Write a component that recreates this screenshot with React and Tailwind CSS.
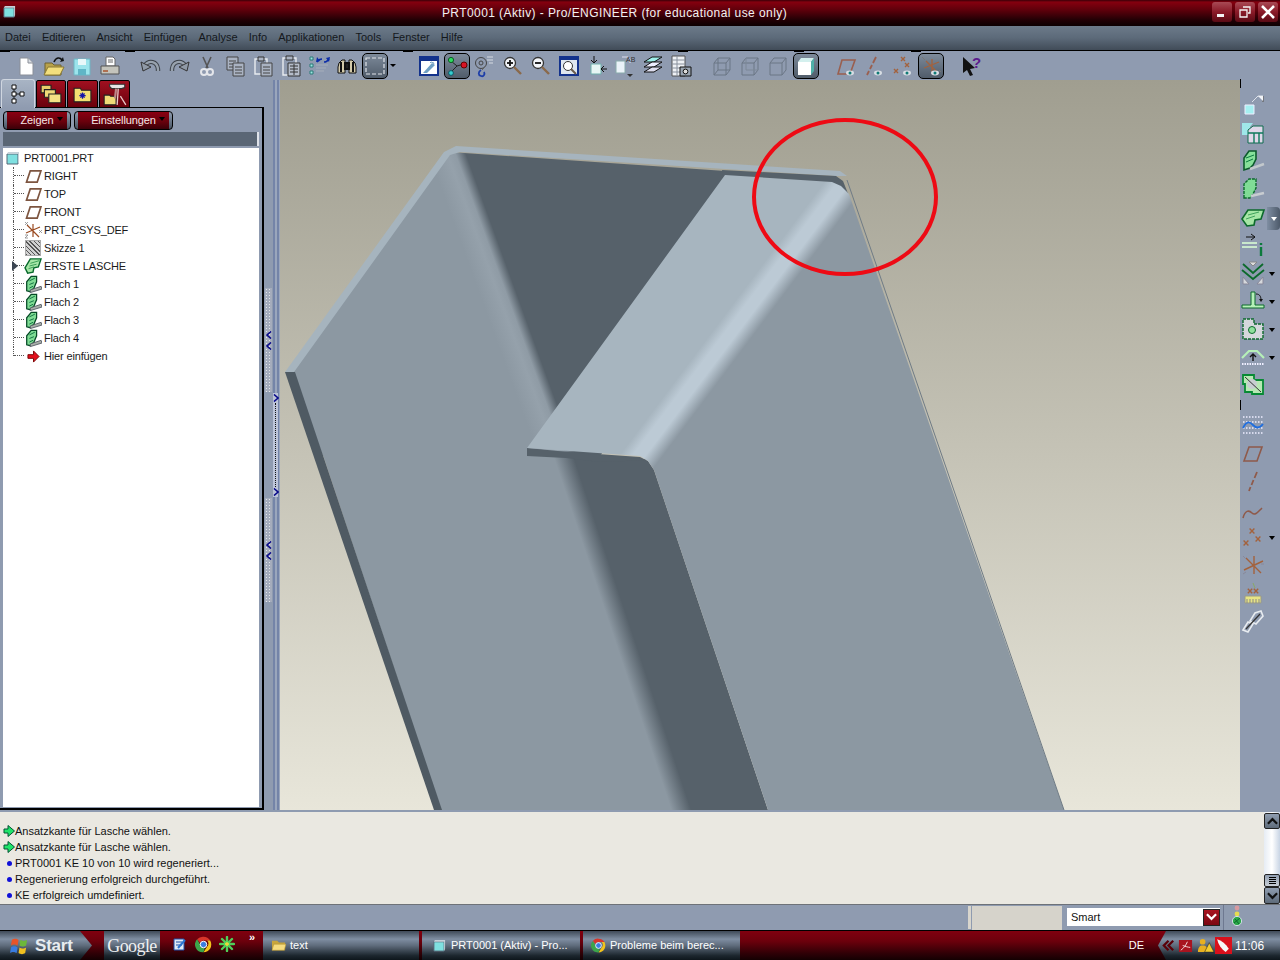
import React from "react";

const slate = "bg-[linear-gradient(#3f4a58_0%,#7f8ea2_28%,#5f6c7c_50%,#1c262e_85%,#0e161c_100%)]";
const red = "bg-[linear-gradient(#80000f_0%,#6c000c_35%,#2e0006_78%,#140002_100%)]";

const I = ({ s = 24, children, c = "" }) => (
  <svg viewBox="0 0 24 24" width={s} height={s} className={c}>{children}</svg>
);

/* ---- toolbar icons ---- */
const New = () => <I><path d="M6 4h8l5 5v12H6z" fill="#fff" stroke="#8a8f98" /><path d="M14 4v5h5" fill="#d8dce2" stroke="#8a8f98" /></I>;
const Open = () => <I><path d="M3 9h7l2 2h7v10H3z" fill="#b9a24a" stroke="#6d6030" /><path d="M6 13h16l-4 8H2z" fill="#f3df7d" stroke="#8a7a34" /><path d="M12 8c2-5 6-5 8-2" fill="none" stroke="#111" strokeWidth="1.6" /><path d="M18 8l4-1-1-4z" fill="#111" /></I>;
const Save = () => <I><path d="M4 5h16v16H4z" fill="#9be4ec" stroke="#6fb6c4" /><path d="M8 5h8v6H8z" fill="#e8f8fa" /><path d="M8 15h8v6H8z" fill="#5fb5c6" /></I>;
const Print = () => <I><path d="M8 3h7l2 2v7H8z" fill="#fff" stroke="#666" /><path d="M3 12h18v8H3z" fill="#c4c4bc" stroke="#555" /><path d="M5 17h5" stroke="#a8552c" strokeWidth="1.5" /><path d="M10 6h5M10 8h5" stroke="#666" /></I>;
const Undo = () => <I><path d="M6 11c4-5 12-4 13 4v2" fill="none" stroke="#3a4048" strokeWidth="4.4" /><path d="M6 11c4-5 12-4 13 4v2" fill="none" stroke="#98a2ae" strokeWidth="2.4" /><path d="M2 8l2 9 8-4z" fill="#8f99a6" stroke="#333" /></I>;
const Redo = () => <I c="-scale-x-100"><path d="M6 11c4-5 12-4 13 4v2" fill="none" stroke="#3a4048" strokeWidth="4.4" /><path d="M6 11c4-5 12-4 13 4v2" fill="none" stroke="#98a2ae" strokeWidth="2.4" /><path d="M2 8l2 9 8-4z" fill="#8f99a6" stroke="#333" /></I>;
const Cut = () => <I><path d="M8 3l5 11M16 3l-5 11" stroke="#555" strokeWidth="1.6" /><circle cx="9" cy="18" r="3" fill="none" stroke="#e4e6ea" strokeWidth="2" /><circle cx="15" cy="18" r="3" fill="none" stroke="#e4e6ea" strokeWidth="2" /></I>;
const Doc = ({ x, y, w = 11, h = 13 }) => (
  <g><path d={`M${x} ${y}h${w}v${h}h-${w}z`} fill="#aab3c2" stroke="#444" /><path d={`M${x + 2} ${y + 4}h${w - 4}M${x + 2} ${y + 7}h${w - 4}M${x + 2} ${y + 10}h${w - 4}`} stroke="#444" /></g>
);
const Copy = () => <I><Doc x={4} y={3} /><Doc x={10} y={9} /></I>;
const Paste = () => <I><path d="M4 5h12v15H4z" fill="none" stroke="#e8ecf0" strokeWidth="1.4" /><path d="M7 3h6v4H7z" fill="#aab3c2" stroke="#333" /><Doc x={10} y={9} /></I>;
const PasteS = () => <I><path d="M4 4h13v17H4z" fill="none" stroke="#e8ecf0" strokeWidth="1.4" /><path d="M7 2h7v4H7z" fill="#aab3c2" stroke="#333" /><path d="M9 9h12v13H9z" fill="#b5bdca" stroke="#333" /><path d="M11 12h8M11 15h8M11 18h8M15 10v11" stroke="#333" /></I>;
const Regen = () => <I><path d="M3 3h3v3H3zM3 10h3v3H3zM3 17h3v3H3z" fill="#9ee6e0" stroke="#2a7a78" /><path d="M9 11h12M9 14h10M9 17h8" stroke="#a6aebb" /><path d="M10 8c2-3 3-3 5-3M22 5c-2 3-3 3-5 3" stroke="#0b2ca8" strokeWidth="1.5" fill="none" /><path d="M10 3l-1 5 4-1zM22 8l1-5-4 1z" fill="#0b2ca8" /></I>;
const Bino = () => <I><path d="M4 9l3-3h3v13H3v-6zM20 9l-3-3h-3v13h7v-6z" fill="#d4cbaa" stroke="#111" /><path d="M10 9h4v6h-4zM6 8v10M18 8v10" stroke="#111" fill="#222" strokeWidth="2" /></I>;
const Repaint = () => <I s={24}><rect x="3" y="4" width="18" height="16" fill="none" stroke="#dfe3ea" strokeWidth="1.2" strokeDasharray="4 2" /></I>;
const Caret = ({ c = "" }) => <span className={`block w-0 h-0 border-x-[3px] border-t-[3px] border-x-transparent border-t-black ${c}`} />;
const RepaintView = () => <I><path d="M3 3h18v18H3z" fill="#fff" stroke="#13328c" strokeWidth="2" /><path d="M3 4h18v3H3z" fill="#13328c" /><path d="M6 19l9-10 3 2-8 8z" fill="#6fa0c4" /><path d="M13 9l1-1 3 1-1 2M12 17h0" stroke="#7da6c4" fill="none" /></I>;
const Spin = () => <I><path d="M6 18l6-6" stroke="#222" /><path d="M12 12l7-2" stroke="#222" /><path d="M12 12L6 7" stroke="#222" /><circle cx="6" cy="6" r="2.6" fill="#2ddc5e" stroke="#0c5a24" /><circle cx="19" cy="11" r="3" fill="#d81425" stroke="#600" /><circle cx="6" cy="19" r="2.4" fill="#36cfd0" stroke="#0a5a6a" /></I>;
const Orient = () => <I><circle cx="8" cy="9" r="5.5" fill="none" stroke="#444" /><circle cx="8" cy="9" r="2" fill="none" stroke="#444" /><path d="M14 3h6M14 6h6M16 9h4" stroke="#d6dbe2" /><path d="M8 16c-3 2-3 5 0 6 3 1 4-2 3-4" fill="none" stroke="#1d3ea8" strokeWidth="1.8" /><path d="M12 13l-3 3" stroke="#666" /></I>;
const Zoom = ({ plus }) => <I><circle cx="9" cy="9" r="5.5" fill="#f4f6fa" stroke="#333" strokeWidth="1.3" /><path d="M6 9h6" stroke="#111" strokeWidth="1.8" />{plus && <path d="M9 6v6" stroke="#111" strokeWidth="1.8" />}<path d="M13 13l7 7" stroke="#8a6a4a" strokeWidth="2.4" /></I>;
const Refit = () => <I><path d="M3 3h18v18H3z" fill="#dfe7f0" stroke="#13328c" strokeWidth="2" /><path d="M3 4h18v2H3z" fill="#13328c" /><circle cx="11" cy="12" r="4.5" fill="#fff" stroke="#333" /><path d="M14 15l5 5" stroke="#6a5a4a" strokeWidth="2" /></I>;
const Plane1 = () => <I><path d="M6 10h10v10H6z" fill="#e6f6f4" stroke="#6fb0ac" /><path d="M9 2v7M6 6l3 3 3-3" stroke="#111" fill="none" /><path d="M22 15h-6M19 12l-3 3 3 3" stroke="#111" fill="none" /></I>;
const ViewName = () => <I><path d="M3 7h9v12H3z" fill="#eaf2f8" stroke="#8aa" /><path d="M9 3h6l2 2v4" fill="none" stroke="#dde" /><text x="13" y="8" fontSize="7" fontFamily="Liberation Sans" fill="#333">AB</text><path d="M14 20h6l-3 3z" fill="#333" /></I>;
const Layers = () => <I><path d="M3 8l8-5h10l-8 5z" fill="#9ff0ea" stroke="#111" /><path d="M3 13l8-5h10l-8 5z" fill="#eef" stroke="#111" /><path d="M3 18l8-5h10l-8 5z" fill="#dde" stroke="#111" /></I>;
const Report = () => <I><path d="M3 2h13v20H3z" fill="#eef1f5" stroke="#555" /><path d="M3 6h13M3 10h13M3 14h13M3 18h13M8 2v20" stroke="#88909c" /><path d="M11 13h11v9H11z" fill="#9aa5b2" stroke="#111" /><circle cx="16.5" cy="17.5" r="2.4" fill="#ddd" stroke="#111" /></I>;
const Box = ({ m }) => <I>
  <path d="M4 9h12v12H4zM4 9l4-5h12v12l-4 5M16 9l4-5" fill="none" stroke="#6b7685" />
  {m === 0 && <path d="M8 4v12h12M8 16l-4 5" fill="none" stroke="#6b7685" />}
  {m === 1 && <path d="M8 4v12h12" fill="none" stroke="#7d8897" />}
</I>;
const Shaded = () => <I><path d="M4 8h13v13H4z" fill="#fff" /><path d="M4 8l3-4h13l-3 4z" fill="#d4f0ee" /><path d="M17 8l3-4v13l-3 4z" fill="#4fb0a8" /></I>;
const Eye = ({ x = 15, y = 19 }) => <g><ellipse cx={x} cy={y} rx="4" ry="2.4" fill="#d7dde3" /><circle cx={x} cy={y} r="1.5" fill="#0e7a76" /></g>;
const PlaneEye = () => <I><path d="M3 20l4-14h13l-5 14z" fill="none" stroke="#9a5f4e" strokeWidth="1.6" /><Eye /></I>;
const AxisEye = () => <I><path d="M13 3l-3 6M9 11l-2 4M6 17l-2 4" stroke="#9a5f4e" strokeWidth="1.8" /><Eye /></I>;
const Xmark = ({ x, y, c = "#a3623d", r = 2 }) => <path d={`M${x - r} ${y - r}l${2 * r} ${2 * r}m0 -${2 * r}l-${2 * r} ${2 * r}`} stroke={c} strokeWidth="1.4" />;
const PointEye = () => <I><Xmark x={12} y={5} /><Xmark x={5} y={17} /><Xmark x={16} y={11} /><Eye x={16} y={19} /></I>;
const CsysEye = () => <I><path d="M13 5v13M5 14l15-6M7 7l11 11" stroke="#a3623d" strokeWidth="1.3" /><path d="M3 3l3 3M20 16l2 2" stroke="#777" /><Eye x={16} y={19} /></I>;
const Help = () => <I><path d="M4 3v16l4-3 3 6 3-1-3-6 5-1z" fill="#111" /><text x="13" y="14" fontSize="15" fontWeight="700" fontFamily="Liberation Sans" fill="#5b1a8c">?</text></I>;

const Btn = ({ on, children }) => (
  <div className="w-7 h-7 flex items-center justify-center shrink-0">
    {on ? <div className="w-[26px] h-[26px] rounded-[5px] border border-black bg-[linear-gradient(#7d8a9a,#505c6a)] flex items-center justify-center">{children}</div> : children}
  </div>
);

/* ---- tree icons ---- */
const TPlane = () => <svg viewBox="0 0 18 14" width="17" height="13"><path d="M1.5 13L5.5 1H17L13 13z" fill="#fff" stroke="#7d5540" strokeWidth="1.8" /></svg>;
const TCsys = () => <svg viewBox="0 0 18 18" width="18" height="18"><path d="M9 3v13M2 12l14-6M3 4l12 12" stroke="#9a4a20" strokeWidth="1.2" /><path d="M1 1l3 3M1 4l3-3M15 9l3 3M15 12l3-3M1 14h3l-3 3h3" stroke="#888" strokeWidth=".8" fill="none" /></svg>;
const TSketch = () => <div className="w-[16px] h-[16px] bg-[#d0d0d0] bg-[repeating-linear-gradient(45deg,#555_0_1px,transparent_1px_3px)] border border-[#aaa]" />;
const TExtrude = () => <svg viewBox="0 0 20 18" width="18" height="16"><path d="M1 11L7 1h12l-3 9-5 1-1 5-6 1z" fill="#a6e6a6" stroke="#086a2c" strokeWidth="1.6" /><path d="M7 6l10-3M6 9l8-2M5 12l6-2" stroke="#2f9a50" /></svg>;
const TFlat = () => <svg viewBox="0 0 20 20" width="19" height="19"><path d="M3 17V7l5-6h6v6l-3 7-4 4z" fill="#7fdc94" stroke="#064a26" strokeWidth="1.4" /><path d="M6 6l6-3M6 10l5-2M6 14l4-2" stroke="#086a3c" /><path d="M7 16l12-4 1 3-13 4z" fill="#a8aea8" stroke="#565c66" /></svg>;
const TArrow = () => <svg viewBox="0 0 14 14" width="13" height="13"><path d="M1 5h6V1l6 6-6 6V9H1z" fill="#e3101c" stroke="#700" /></svg>;

const tree = [
  ["RIGHT", <TPlane />], ["TOP", <TPlane />], ["FRONT", <TPlane />],
  ["PRT_CSYS_DEF", <TCsys />], ["Skizze 1", <TSketch />], ["ERSTE LASCHE", <TExtrude />, true],
  ["Flach 1", <TFlat />], ["Flach 2", <TFlat />], ["Flach 3", <TFlat />], ["Flach 4", <TFlat />],
  ["Hier einfügen", <TArrow />],
];

/* ---- right toolbar ---- */
const RAsm = () => <I><path d="M4 12h9v9H4z" fill="#a5f0f2" stroke="#eef" /><path d="M11 9l6-6h5v6" fill="none" stroke="#dde2ea" /><path d="M22 3v6" stroke="#333" /><path d="M17 3h5v5z" fill="#f2f4f8" /></I>;
const RComp = () => <I><path d="M1 2h11l-3 4v8H1z" fill="#9fe6ea" /><path d="M7 9l5-4h10v17H7z" fill="#e0d8ea" stroke="#0c6a4c" /><path d="M7 12h15M13 12v10M18 12v10" stroke="#0c7a5c" strokeWidth="1.4" /></I>;
const RWall = () => <I><path d="M3 21V9l5-7h7v8l-3 6-3 3z" fill="#86e09a" stroke="#0c5a2c" strokeWidth="1.6" /><path d="M5 9l8-3M5 13l7-3" stroke="#0a7a40" /><path d="M9 20l14-5" stroke="#c2c8cc" strokeWidth="2.4" /></I>;
const RWall2 = () => <I><path d="M3 21V7l5-5h7v9l-3 6-3 4z" fill="#80dc96" stroke="#0c6a2c" strokeWidth="1.4" strokeDasharray="3 1" /><path d="M10 19l13-3" stroke="#c8ccd0" strokeWidth="2.4" /></I>;
const RExt = () => <I><path d="M1 14L7 5h16l-3 9-6 1-1 5-7 1z" fill="#a6e6a6" stroke="#0c6a2c" strokeWidth="1.6" /><path d="M7 10l11-3M5 14l9-3" stroke="#3fa25c" /></I>;
const RSeam = () => <I><path d="M5 4h9M10 1l4 3-4 3" stroke="#111" fill="none" /><path d="M1 10h15M1 14h15" stroke="#c9e8cc" strokeWidth="2" /><path d="M20 10v2M20 14v9" stroke="#0c7a3c" strokeWidth="2.4" /></I>;
const RBend = () => <I><path d="M2 3l10 9 10-9" fill="none" stroke="#0c6a2c" strokeWidth="1.8" /><path d="M8 1l4 4 4-4z" fill="#ddd" stroke="#888" /><path d="M1 9l11 9 11-9" fill="none" stroke="#0c6a2c" strokeWidth="1.8" /><path d="M2 23v-7l6 7zM22 23v-7l-6 7z" fill="#d5d8dc" stroke="#889" /></I>;
const RUnbend = () => <I><path d="M10 3h4v13h9v3H1v-3h9z" fill="#b6f0b8" stroke="#0c6a2c" /><path d="M15 5c4 0 5 3 5 6" fill="none" stroke="#111" /><path d="M18 10l2 3 2-3z" fill="#111" /></I>;
const RForm = () => <I><path d="M2 2h11v5h9v15H2z" fill="#d5d8dc" stroke="#0c6a2c" strokeWidth="1.4" strokeDasharray="3 1" /><circle cx="11" cy="13" r="3.5" fill="#8fe09c" stroke="#0c6a2c" /></I>;
const RFlat = () => <I><path d="M1 13l7-7h8l7 7" fill="none" stroke="#b6f0b8" strokeWidth="2.2" /><path d="M12 16V9M9 12l3-3 3 3" stroke="#111" fill="none" strokeWidth="1.4" /><path d="M1 19h22" stroke="#eef" strokeWidth="2.2" strokeDasharray="1.5 1" /></I>;
const RCorner = () => <I><path d="M2 2h11v5h9v14H11v-2H4v-8H2z" fill="#b8e8b4" stroke="#078a34" strokeWidth="1.8" /><circle cx="11" cy="11" r="5" fill="#c7cdd0" /><path d="M4 4l16 15" stroke="#333" /></I>;
const RDotted = () => <I><path d="M2 4h20M2 9h20M2 15h20M2 20h20" stroke="#eef" strokeDasharray="1.5 1.5" strokeWidth="1.6" /><path d="M2 15c4-8 7-6 10-3s6 4 10-1" fill="none" stroke="#1f6ee0" strokeWidth="1.8" /></I>;
const RPlane = () => <I><path d="M3 20L8 6h13l-5 14z" fill="none" stroke="#8f5a4a" strokeWidth="1.6" /></I>;
const RAxis = () => <I><path d="M16 3l-2.5 6M12.5 11l-2 5M9.5 18l-1.5 4" stroke="#8f5a4a" strokeWidth="1.8" /></I>;
const RCurve = () => <I><path d="M2 21c2-8 6-8 9-5s6-1 10-5" fill="none" stroke="#8f5a4a" strokeWidth="1.6" /></I>;
const RPts = () => <I><Xmark x={11} y={6} r={2.4} /><Xmark x={5} y={18} r={2.4} /><Xmark x={17} y={14} r={2.4} /></I>;
const RCsys = () => <I><path d="M13 3v18M3 17l19-9M5 5l15 15" stroke="#a3623d" strokeWidth="1.4" /><path d="M2 3l3 3M20 11h3M2 21l3-2" stroke="#889" /></I>;
const RAnalysis = () => <I><Xmark x={9} y={10} r={2.2} /><Xmark x={15} y={10} r={2.2} /><path d="M12 2l2 5" stroke="#8a6" /><path d="M4 15h16v7H4z" fill="#e7e484" stroke="#998" /><path d="M6 18v4M9 18v4M12 18v4M15 18v4M18 18v4" stroke="#888" /></I>;
const RChain = () => <I><path d="M2 21l5-8 5 2-5 8z" fill="none" stroke="#e8ecf0" strokeWidth="1.6" /><path d="M9 12l5-8 6-2 2 5-7 8z" fill="none" stroke="#e8ecf0" strokeWidth="1.6" /><path d="M5 20l14-15" stroke="#333" strokeWidth="1.2" /></I>;

const R = ({ children, drop }) => (
  <div className="relative h-7 w-full flex items-center pl-[1px]">
    {children}
    {drop && <Caret c="absolute left-[29px] top-[13px] border-x-[3.5px] border-t-[4px]" />}
  </div>
);

const MsgArrow = () => <svg viewBox="0 0 12 12" width="12" height="12"><path d="M1 4h4V0.5L11.5 6 5 11.5V8H1z" fill="#1fe46a" stroke="#053" /></svg>;
const MsgDot = () => <span className="block w-[5px] h-[5px] rounded-full bg-[#1010d8] mx-[3.5px]" />;

const msgs = [
  [<MsgArrow />, "Ansatzkante für Lasche wählen."],
  [<MsgArrow />, "Ansatzkante für Lasche wählen."],
  [<MsgDot />, "PRT0001 KE 10 von 10 wird regeneriert..."],
  [<MsgDot />, "Regenerierung erfolgreich durchgeführt."],
  [<MsgDot />, "KE erfolgreich umdefiniert."],
];

const Chev = ({ up, c = "#111" }) => <svg viewBox="0 0 12 8" width="11" height="8"><path d={up ? "M1 7l5-5 5 5" : "M1 1l5 5 5-5"} fill="none" stroke={c} strokeWidth="2.4" /></svg>;
const SashChev = ({ left }) => <svg viewBox="0 0 6 8" width="6" height="8" className="block"><path d={left ? "M5 0.5L1 4l4 3.5" : "M1 0.5L5 4 1 7.5"} fill="none" stroke="#08088a" strokeWidth="1.6" /></svg>;

const Grip = () => (
  <div className="h-[104px] w-[7px] ml-px flex flex-col items-center bg-[#a5acbc] bg-[radial-gradient(#e4e6ea_1px,transparent_1px)] bg-[length:3px_3px]">
    <div className="h-[43px]" />
    <SashChev left />
    <div className="h-[3px]" />
    <SashChev left />
  </div>
);

const Chrome = ({ s = 16 }) => (
  <svg viewBox="0 0 24 24" width={s} height={s}>
    <path d="M12 1a11 11 0 0 1 9.5 5.5H12a5.5 5.5 0 0 0-5 3.2L3 4.6A11 11 0 0 1 12 1z" fill="#d8352a" />
    <path d="M21.5 6.5A11 11 0 0 1 12 23l5-8a5.5 5.5 0 0 0 0-8.5z" fill="#f3c31b" />
    <path d="M3 4.6l4.5 7.8a5.5 5.5 0 0 0 6.5 4.7L12 23A11 11 0 0 1 3 4.6z" fill="#3ca54a" />
    <circle cx="12" cy="12" r="4.6" fill="#3a7de0" stroke="#fff" strokeWidth="1.4" />
  </svg>
);

const Part = ({ s = 14 }) => (
  <svg viewBox="0 0 14 14" width={s} height={s}><path d="M1 3h11v10H1z" fill="#7fe0e0" stroke="#567" /><path d="M12 3l1-2v10l-1 2zM1 3l1-2h11l-1 2z" fill="#c5d0d8" /></svg>
);

const Folder = () => <svg viewBox="0 0 18 16" width="16" height="14"><path d="M1 3h6l2 2h7v9H1z" fill="#c9a63c" /><path d="M3 7h14l-2 7H1z" fill="#f6dc7e" stroke="#a98a30" strokeWidth=".6" /></svg>;

const Win = () => (
  <svg viewBox="0 0 20 20" width="19" height="19">
    <path d="M2 4c3-2 5-1 7 0l-1 6c-2-1-4-2-7 0z" fill="#e8542a" />
    <path d="M11 4c2 1 4 2 7 0l-1 6c-3 2-5 1-7 0z" fill="#6cb83a" />
    <path d="M1 12c3-2 5-1 7 0l-1 6c-2-1-4-2-7 0z" fill="#3a7ce0" />
    <path d="M10 12c2 1 4 2 7 0l-1 6c-3 2-5 1-7 0z" fill="#f0c020" />
  </svg>
);

const Model = () => (
  <svg viewBox="280 80 960 730" width="960" height="730" className="block">
    <defs>
      <linearGradient id="g1" gradientUnits="userSpaceOnUse" x1="477" y1="287" x2="510" y2="275">
        <stop offset="0" stopColor="#8c98a2" />
        <stop offset=".5" stopColor="#95a1ab" />
        <stop offset=".72" stopColor="#8f9ba5" />
        <stop offset="1" stopColor="#56616a" />
      </linearGradient>
      <linearGradient id="g2" gradientUnits="userSpaceOnUse" x1="616" y1="644" x2="634" y2="638">
        <stop offset="0" stopColor="#8c98a2" />
        <stop offset="1" stopColor="#56616a" />
      </linearGradient>
      <linearGradient id="g3" gradientUnits="userSpaceOnUse" x1="727" y1="312" x2="755" y2="333">
        <stop offset="0" stopColor="#a7b5bf" />
        <stop offset=".3" stopColor="#bccad5" />
        <stop offset=".6" stopColor="#bccad5" />
        <stop offset="1" stopColor="#8c98a2" />
      </linearGradient>
    </defs>
    <polygon points="287,372 450,152 740,172 640,400 600,456 323,456" fill="url(#g1)" />
    <polygon points="323,455 527,455 527,449 640,457 648,461 654,470 768,810 441,810" fill="url(#g2)" />
    <polygon points="527,448 650,460 600,462 566,458 527,456" fill="#56616a" />
    <polygon points="285,372 295,372 442,810 434,810" fill="#4f5a63" />
    <polygon points="285,372 444,152 456,146 840,171 847,176 836,176 460,152 450,155 294,372" fill="#a6b4be" />
    <polygon points="722,170 836,176 843,181 849,196 834,184 723,176" fill="#56616a" />
    <polygon points="725,175 832,182 841,186 849,194 1064,810 768,810 654,470 648,461 640,456 527,448" fill="url(#g3)" />
    <line x1="847" y1="180" x2="1064" y2="810" stroke="#6f7b85" strokeWidth="1" />
    <ellipse cx="845" cy="197" rx="91" ry="77" fill="none" stroke="#ee0a14" strokeWidth="4" />
  </svg>
);

const menus = ["Datei", "Editieren", "Ansicht", "Einfügen", "Analyse", "Info", "Applikationen", "Tools", "Fenster", "Hilfe"];

const MenuBtn = ({ label, w, tri }) => (
  <div className={`${w} h-[19px] rounded-[4px] border border-black bg-[linear-gradient(#8f9db0,#4a5665)] px-[3px]`}>
    <div className="relative h-full flex items-center justify-center bg-[linear-gradient(#8a0012,#6a000c_55%,#3a0008)] text-[#f4e6e6] tracking-[-0.1px]">
      <span>{label}</span>
      <Caret c={`absolute ${tri} top-[5px] border-x-[3.5px] border-t-[4px] border-t-[#300]`} />
    </div>
  </div>
);

export default function App() {
  return (
    <div className="w-[1280px] h-[960px] overflow-hidden flex flex-col bg-[#8f9bb0] text-[11px] leading-none text-black font-['Liberation_Sans',sans-serif]">
      {/* Title */}
      <div className={`h-[26px] shrink-0 relative flex items-center justify-center pr-[51px] text-[#f2f2f2] text-[12px] bg-[linear-gradient(#3a0008_0,#85000f_8%,#5c000b_40%,#240005_75%,#0c0002_100%)]`}>
        <div className="absolute left-[3px] top-[5px] w-[14px] h-[13px]"><Part s={13} /></div>
        <span className="tracking-[0.42px]">PRT0001 (Aktiv) - Pro/ENGINEER (for educational use only)</span>
        <div className="absolute right-[2px] top-[2px] flex gap-[3px]">
          {["min", "max", "close"].map((k) => (
            <div key={k} className="w-[20px] h-[20px] rounded-[3px] bg-[linear-gradient(#a84a55,#8a1a28_50%,#5a0a14)] flex items-center justify-center">
              <svg viewBox="0 0 16 16" width="16" height="16">
                {k === "min" && <path d="M3 10h7v3H3z" fill="#f4f4f4" />}
                {k === "max" && <path d="M6 3h7v6h-2M3 6h7v7H3z" fill="none" stroke="#f4f4f4" strokeWidth="1.3" />}
                {k === "close" && <path d="M2 2l12 12M14 2L2 14" stroke="#fff" strokeWidth="2.6" />}
              </svg>
            </div>
          ))}
        </div>
      </div>

      {/* Menu */}
      <div className="h-[25px] shrink-0 flex items-center gap-[11.2px] pl-[5px] pb-[2px] border-b border-black text-[#14181c] bg-[linear-gradient(#6c7a8a,#5c6a79_50%,#414c58)]">
        {menus.map((m) => <span key={m}>{m}</span>)}
      </div>

      {/* Toolbar */}
      <div className="h-[29px] shrink-0 relative flex items-center pl-[12px] bg-[#8f9bb0]">
        <div className="absolute top-0 left-0 w-[10px] h-px bg-black" />
        <div className="absolute top-0 left-[125px] w-[10px] h-px bg-black" />
        <div className="absolute top-0 left-[403px] w-[10px] h-px bg-black" />
        <div className="absolute top-0 left-[678px] w-[10px] h-px bg-black" />
        <div className="absolute top-0 left-[794px] w-[10px] h-px bg-black" />
        <div className="absolute top-0 left-[911px] w-[10px] h-px bg-black" />
        <Btn><New /></Btn><Btn><Open /></Btn><Btn><Save /></Btn><Btn><Print /></Btn>
        <div className="w-[13px] shrink-0" />
        <Btn><Undo /></Btn><Btn><Redo /></Btn><Btn><Cut /></Btn><Btn><Copy /></Btn><Btn><Paste /></Btn><Btn><PasteS /></Btn><Btn><Regen /></Btn><Btn><Bino /></Btn>
        <Btn on><Repaint /></Btn>
        <div className="w-[8px] shrink-0 flex justify-center"><Caret /></div>
        <div className="w-[18px] shrink-0" />
        <Btn><RepaintView /></Btn><Btn on><Spin /></Btn><Btn><Orient /></Btn><Btn><Zoom plus /></Btn><Btn><Zoom /></Btn><Btn><Refit /></Btn><Btn><Plane1 /></Btn><Btn><ViewName /></Btn><Btn><Layers /></Btn><Btn><Report /></Btn>
        <div className="w-[13px] shrink-0" />
        <Btn><Box m={0} /></Btn><Btn><Box m={1} /></Btn><Btn><Box m={2} /></Btn><Btn on><Shaded /></Btn>
        <div className="w-[13px] shrink-0" />
        <Btn><PlaneEye /></Btn><Btn><AxisEye /></Btn><Btn><PointEye /></Btn><Btn on><CsysEye /></Btn>
        <div className="w-[12px] shrink-0" />
        <Btn><Help /></Btn>
      </div>

      {/* Main */}
      <div className="h-[730px] shrink-0 flex">
        {/* Left panel */}
        <div className="w-[264px] shrink-0 flex flex-col">
          <div className="h-[28px] shrink-0 flex items-end pl-px gap-[1px] relative z-10 -mb-px">
            <div className="w-[34px] h-[29px] rounded-t-[3px] bg-[linear-gradient(#a8b4c4,#8f9bb0)] border-t border-x border-[#cfd6e0] flex items-center justify-center">
              <svg viewBox="0 0 16 20" width="16" height="20"><path d="M2 1h4v4H2zM2 8h4v4H2zM2 15h4v4H2zM10 8h4v4h-4z" fill="#fff" stroke="#111" /><path d="M4 5v3M4 12v3M6 10h4" stroke="#111" /></svg>
            </div>
            <div className="w-[30px] h-[28px] bg-[linear-gradient(#a01020,#6a000c)] border border-black rounded-t-[2px] flex items-center justify-center">
              <svg viewBox="0 0 20 20" width="22" height="22"><path d="M1 2h9v7H1z" fill="#e8cf6a" stroke="#222" /><path d="M4 6h10v7H4z" fill="#f0da78" stroke="#222" /><path d="M8 10h11v8H8z" fill="#f4e084" stroke="#222" /></svg>
            </div>
            <div className="w-[31px] h-[28px] bg-[linear-gradient(#a01020,#6a000c)] border border-black rounded-t-[2px] flex items-center justify-center">
              <svg viewBox="0 0 20 20" width="21" height="21"><path d="M2 4h6l1 2h9v11H2z" fill="#f3df72" stroke="#222" /><path d="M10 8v6M7 11h6M8 9l4 4M12 9l-4 4" stroke="#1414a8" strokeWidth="1.2" /></svg>
            </div>
            <div className="w-[31px] h-[28px] bg-[linear-gradient(#a01020,#6a000c)] border border-black rounded-t-[2px] flex items-center justify-center">
              <svg viewBox="0 0 24 22" width="26" height="24"><path d="M2 12h5l1 1h5v8H2z" fill="#f0da78" stroke="#222" /><path d="M7 2h14v3l-3 1H9L7 4z" fill="#e6e6e6" stroke="#333" /><path d="M13 6l-1 9" stroke="#b88" strokeWidth="2" /><path d="M15 6l-1 15M17 13l5 8" stroke="#e8c8c8" strokeWidth="1.2" /></svg>
            </div>
          </div>
          <div className="flex-1 min-h-0 flex flex-col border-t border-r-2 border-b-2 border-black pl-[3px] pr-[3px] pb-[1px] bg-[#8f9bb0]">
            <div className="h-[24px] shrink-0 flex items-start pt-[3px] gap-[3px]">
              <MenuBtn label="Zeigen" w="w-[68px]" tri="left-[50px]" />
              <MenuBtn label="Einstellungen" w="w-[99px]" tri="left-[81px]" />
            </div>
            <div className="h-[14px] shrink-0 w-[256px] bg-[#5a6675] border-r-2 border-[#dfe3ea]" />
            <div className="h-[2px] shrink-0" />
            <div className="flex-1 min-h-0 w-[256px] bg-white flex flex-col text-[#1a1a1a] tracking-[-0.15px]">
              <div className="h-[18px] mt-[1px] shrink-0 flex items-center">
                <div className="ml-[3px] w-[18px]"><Part s={14} /></div>
                <span>PRT0001.PRT</span>
              </div>
              {tree.map(([label, icon, exp], i) => (
                <div key={label} className="h-[18px] shrink-0 flex items-center">
                  <div className="w-[10px] shrink-0" />
                  <div className={`relative w-[11px] shrink-0 border-l border-dotted border-[#555] ${i === tree.length - 1 ? "h-[9px] self-start" : "h-full"}`}>
                    <div className="h-[9px] border-b border-dotted border-[#555]" />
                    {exp && <span className="absolute -left-[2px] top-[4px] block w-0 h-0 border-y-[5px] border-l-[6px] border-y-transparent border-l-[#3c4652]" />}
                  </div>
                  <div className="w-[18px] h-[18px] shrink-0 flex items-center justify-center">{icon}</div>
                  <span className="ml-[2px]">{label}</span>
                </div>
              ))}
            </div>
          </div>
        </div>

        {/* Sashes */}
        <div className="w-[9px] shrink-0 flex flex-col pt-[208px] bg-[#8f9bb0]">
          <Grip />
          <div className="h-[106px] shrink-0" />
          <Grip />
        </div>
        <div className="w-[7px] shrink-0 flex flex-col pt-[313px] bg-[repeating-linear-gradient(90deg,#7484a8_0_2px,#9aa6bc_2px_4px)]">
          <div className="h-[104px] w-[5px] flex flex-col items-center justify-between py-[1px] bg-[#bcc4d8]">
            <SashChev />
            <div className="flex-1 w-px my-[1px] border-l border-dotted border-[#111]" />
            <SashChev />
          </div>
        </div>

        {/* Canvas */}
        <div className="w-[960px] shrink-0 bg-[linear-gradient(#a09e90,#e8e6da)]">
          <Model />
        </div>

        {/* Right toolbar */}
        <div className="w-[40px] shrink-0 pt-[11px] relative bg-[#8f9bb0]">
          <div className="absolute left-0 top-[-1px] w-px h-[9px] bg-black" />
          <div className="absolute left-0 top-[320px] w-px h-[10px] bg-black" />
          <div className="absolute right-0 top-[127px] w-[13px] h-[23px] rounded-r-[4px] bg-[linear-gradient(90deg,#7f8ea2,#4d5a6a)] flex items-center justify-center"><Caret c="border-t-white border-x-[3.5px] border-t-[4px]" /></div>
          <R><RAsm /></R><R><RComp /></R><R><RWall /></R><R><RWall2 /></R><R><RExt /></R><R><RSeam /></R>
          <R drop><RBend /></R><R drop><RUnbend /></R><R drop><RForm /></R><R drop><RFlat /></R><R><RCorner /></R>
          <div className="h-[12px]" />
          <R><RDotted /></R><R><RPlane /></R><R><RAxis /></R><R><RCurve /></R><R drop><RPts /></R><R><RCsys /></R><R><RAnalysis /></R><R><RChain /></R>
        </div>
      </div>

      {/* Message area */}
      <div className="h-[2px] shrink-0 bg-[#8f9bb0]" />
      <div className="h-[93px] shrink-0 flex bg-[#eae8e1] border-b border-[#6e7278]">
        <div className="flex-1 pt-[11px] pl-[3px] flex flex-col">
          {msgs.map(([ic, t], i) => (
            <div key={i} className="h-[16px] flex items-center text-[#111]">
              <div className="w-[12px] flex items-center justify-start">{ic}</div>
              <span>{t}</span>
            </div>
          ))}
        </div>
        <div className="w-[16px] shrink-0 flex flex-col bg-[linear-gradient(90deg,#e6ecf4,#fff,#c8d4e4)]">
          <div className="h-[16px] shrink-0 mt-[1px] rounded-[2px] border border-[#222] bg-[linear-gradient(#8f9db0,#5e6b7a)] flex items-center justify-center"><Chev up /></div>
          <div className="flex-1" />
          <div className="h-[13px] shrink-0 rounded-[2px] border border-[#222] bg-[linear-gradient(#8f9db0,#c8ced6)] flex flex-col items-center justify-center gap-[1px]">
            <div className="w-[7px] h-px bg-black" /><div className="w-[7px] h-px bg-black" /><div className="w-[7px] h-px bg-black" /><div className="w-[7px] h-px bg-black" />
          </div>
          <div className="h-[17px] shrink-0 rounded-[2px] border border-[#222] bg-[linear-gradient(#8f9db0,#5e6b7a)] flex items-center justify-center"><Chev /></div>
        </div>
      </div>

      {/* Status row */}
      <div className="h-[25px] shrink-0 flex items-stretch bg-[#8f9bb0]">
        <div className="w-[968px] shrink-0" />
        <div className="w-[3px] shrink-0 bg-[#d8d5cd] my-[1px]" />
        <div className="w-[90px] shrink-0 bg-[#d6d3cb] ml-[1px] mt-px" />
        <div className="w-[5px] shrink-0" />
        <div className="w-[153px] shrink-0 h-[18px] mt-[3px] bg-white flex items-center pl-[4px] justify-between text-[#111]">
          <span>Smart</span>
          <div className="w-[17px] h-[17px] border border-[#222] bg-[linear-gradient(#a81420,#7a0612)] flex items-center justify-center"><Chev c="#fff" /></div>
        </div>
        <div className="w-[3px] shrink-0 ml-[3px] border-l border-[#6e7890]" />
        <div className="flex-1 flex justify-start pl-[5px]">
          <svg viewBox="0 0 12 22" width="12" height="22"><circle cx="6" cy="3" r="2.4" fill="#d89aa0" /><circle cx="6" cy="9" r="2.4" fill="#e6dc50" /><circle cx="6" cy="16" r="4.6" fill="#2aa84a" stroke="#eef" strokeWidth=".8" /><path d="M3 18l6-5M4 14l4 5" stroke="#0c6a2c" /></svg>
        </div>
      </div>

      {/* Taskbar */}
      <div className={`h-[30px] shrink-0 flex border-t border-black text-white ${red}`}>
        <div className={`w-[92px] shrink-0 flex items-center pl-[10px] gap-[6px] ${slate} [clip-path:polygon(0_0,80px_0,92px_50%,80px_100%,0_100%)]`}>
          <Win />
          <span className="text-[17px] font-bold tracking-[-0.2px] text-[#e8ecf0]">Start</span>
        </div>
        <div className="w-[12px] shrink-0" />
        <div className={`w-[56px] shrink-0 flex items-center justify-center ${slate}`}>
          <span className="text-[18px] tracking-[-0.6px] text-[#eef0f2] font-['Liberation_Serif',serif]">Google</span>
        </div>
        <div className="w-[103px] shrink-0 flex items-start pl-[12px] pt-[5px] gap-[7px]">
          <svg viewBox="0 0 16 16" width="16" height="16"><path d="M2 3h10v11H2z" fill="#dfe9f6" stroke="#1d4ea8" /><path d="M4 6l6 0M4 9h6" stroke="#1d4ea8" /><path d="M6 12l7-8" stroke="#2a72d0" strokeWidth="2" /></svg>
          <Chrome s={17} />
          <svg viewBox="0 0 16 16" width="16" height="16">
            <circle cx="8" cy="8" r="2.4" fill="#e8d83c" />
            <path d="M8 1v4M8 11v4M1 8h4M11 8h4M3 3l3 3M10 10l3 3M13 3l-3 3M6 10l-3 3" stroke="#4fd05a" strokeWidth="2.4" strokeLinecap="round" />
          </svg>
          <span className="ml-[7px] -mt-[4px] text-[11px] font-bold">»</span>
        </div>
        <div className={`w-[156px] shrink-0 flex items-center pl-[8px] pb-[1px] gap-[3px] ${slate}`}><Folder /><span>text</span></div>
        <div className="w-[3px] shrink-0" />
        <div className={`w-[158px] shrink-0 flex items-center pl-[11px] pb-[1px] gap-[5px] ${slate}`}><Part s={13} /><span>PRT0001 (Aktiv) - Pro...</span></div>
        <div className="w-[3px] shrink-0" />
        <div className={`w-[157px] shrink-0 flex items-center pl-[8px] pb-[1px] gap-[4px] ${slate}`}><Chrome s={15} /><span>Probleme beim berec...</span></div>
        <div className="flex-1 flex items-center justify-end pr-[14px]"><span>DE</span></div>
        <div className={`w-[122px] shrink-0 flex items-center pl-[3px] gap-[1px] ${slate} [clip-path:polygon(8px_0,100%_0,100%_100%,8px_100%,0_50%)]`}>
          <svg viewBox="0 0 16 16" width="15" height="15" className="mr-[1px]"><path d="M8 3L3 8l5 5M13 3L8 8l5 5" fill="none" stroke="#5a0008" strokeWidth="2.4" /></svg>
          <svg viewBox="0 0 16 16" width="15" height="15"><path d="M1 2h14v13H1z" fill="#a8141f" /><path d="M3 13c3-2 6-6 7-9M5 8c3 1 6 2 8 2" stroke="#f2e0e0" fill="none" /></svg>
          <div className="w-[2px]" />
          <svg viewBox="0 0 18 18" width="17" height="17"><circle cx="6" cy="5" r="3" fill="#e8b020" /><path d="M1 16c0-5 2-7 5-7s6 2 6 7z" fill="#e8b020" /><path d="M13 6l5 10H8z" fill="#f4cc30" stroke="#222" strokeWidth=".6" /></svg>
          <svg viewBox="0 0 16 16" width="17" height="17"><path d="M0 0h16v16H0z" fill="#d8101c" /><path d="M2 2c4 1 8 4 11 9l-3 3C6 11 3 7 2 2z" fill="#f6f6f6" /></svg>
          <span className="ml-[2px] text-[12px]">11:06</span>
        </div>
      </div>
    </div>
  );
}
